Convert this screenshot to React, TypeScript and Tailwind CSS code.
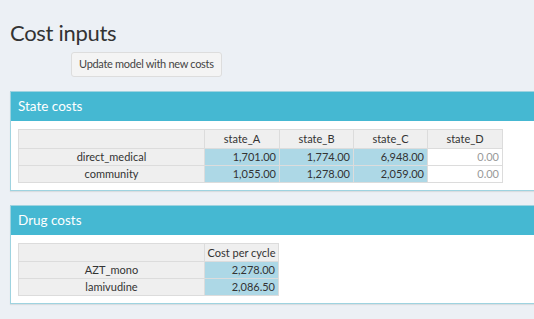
import React from 'react';

const FONT = { fontFamily: "'Lato', 'Noto Sans', sans-serif" };

type Row = { label: string; values: { v: string; editable: boolean }[] };

const STATE_HEADERS = ['state_A', 'state_B', 'state_C', 'state_D'];
const STATE_WIDTHS = ['w-[75px]', 'w-[74px]', 'w-[74px]', 'w-[75px]'];
const STATE_ROWS: Row[] = [
  {
    label: 'direct_medical',
    values: [
      { v: '1,701.00', editable: true },
      { v: '1,774.00', editable: true },
      { v: '6,948.00', editable: true },
      { v: '0.00', editable: false },
    ],
  },
  {
    label: 'community',
    values: [
      { v: '1,055.00', editable: true },
      { v: '1,278.00', editable: true },
      { v: '2,059.00', editable: true },
      { v: '0.00', editable: false },
    ],
  },
];

const DRUG_ROWS: Row[] = [
  { label: 'AZT_mono', values: [{ v: '2,278.00', editable: true }] },
  { label: 'lamivudine', values: [{ v: '2,086.50', editable: true }] },
];

function CostTable({
  headers,
  widths,
  rows,
  headH,
}: {
  headers: string[];
  widths: string[];
  rows: Row[];
  headH: string;
}) {
  return (
    <table className="border-collapse table-fixed text-[11px] leading-[14px] text-[#333]">
      <thead>
        <tr className={headH}>
          <th className="w-[186px] p-0 border border-[#dcdcdc] bg-[#efefef]" />
          {headers.map((h, i) => (
            <th
              key={h}
              className={`${widths[i]} p-0 border border-[#dcdcdc] bg-[#efefef] font-normal text-center whitespace-nowrap`}
            >
              {h}
            </th>
          ))}
        </tr>
      </thead>
      <tbody>
        {rows.map((r) => (
          <tr key={r.label} className="h-[17px]">
            <td className="p-0 border border-[#dcdcdc] bg-[#efefef] text-center">{r.label}</td>
            {r.values.map((c, i) => (
              <td
                key={i}
                className={`py-0 px-[3px] border border-[#dcdcdc] text-right ${c.editable ? 'bg-[#add8e6]' : 'bg-white text-[#999]'}`}
              >
                {c.v}
              </td>
            ))}
          </tr>
        ))}
      </tbody>
    </table>
  );
}

function Box({ title, children }: { title: string; children: React.ReactNode }) {
  return (
    <div className="w-[560px] border border-[#9ed3e0] bg-white shadow-[0_1px_1px_rgba(0,0,0,0.08)]">
      <div className="h-[29px] bg-[#45b8d2] flex items-center px-[7px] text-white text-[13.5px]">{title}</div>
      <div className="px-[7px] pt-[8px] pb-[7px]">{children}</div>
    </div>
  );
}

export default function App() {
  return (
    <div className="w-[534px] h-[319px] overflow-hidden bg-[#ecf0f5]" style={FONT}>
      <div className="pl-[10px] pt-[19px]">
        <h1 className="text-[22px] leading-[27px] tracking-[-0.3px] text-[#333]">Cost inputs</h1>
        <div className="mt-[6px] pl-[61px] flex">
          <button className="h-[25px] px-[7px] rounded-[3px] border border-[#dddddd] bg-[#f4f4f4] text-[11px] tracking-[-0.3px] text-[#444]">
            Update model with new costs
          </button>
        </div>
        <div className="mt-[14px] flex flex-col gap-[14px]">
          <Box title="State costs">
            <CostTable headers={STATE_HEADERS} widths={STATE_WIDTHS} rows={STATE_ROWS} headH="h-[19px]" />
          </Box>
          <Box title="Drug costs">
            <CostTable headers={['Cost per cycle']} widths={['w-[74px]']} rows={DRUG_ROWS} headH="h-[18px]" />
          </Box>
        </div>
      </div>
    </div>
  );
}
